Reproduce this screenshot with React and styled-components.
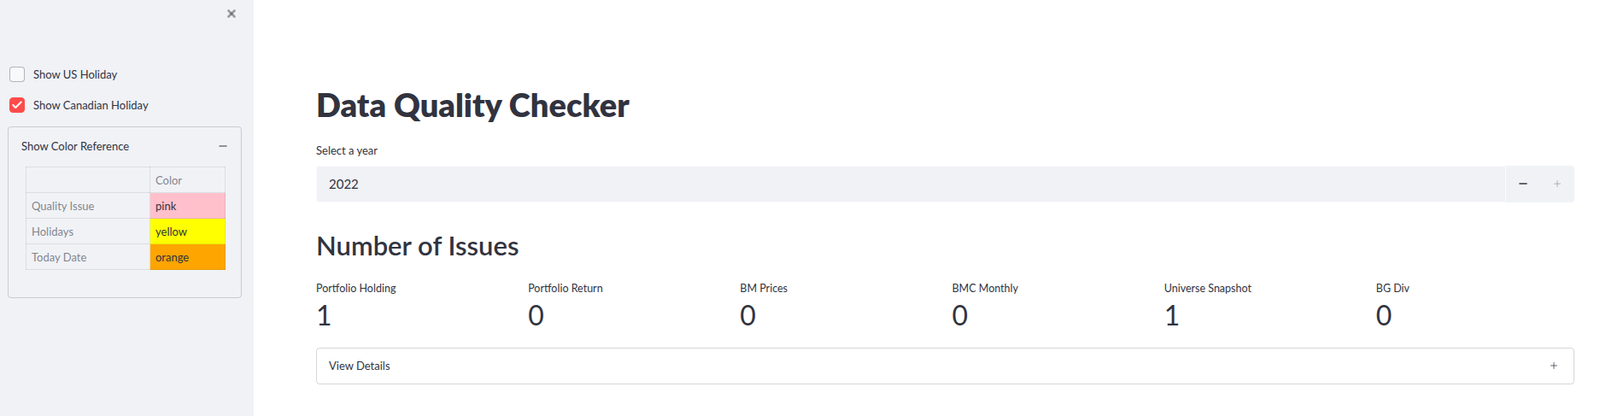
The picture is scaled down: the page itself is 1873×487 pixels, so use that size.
import React from "react";
import styled, { createGlobalStyle } from "styled-components";
import { X, Check, Minus, Plus } from "lucide-react";

const GlobalStyle = createGlobalStyle`
  body {
    margin: 0;
    font-family: Lato, "Liberation Sans", sans-serif;
    color: #31333f;
    background: #ffffff;
  }
`

const Page = styled.div`
  display: flex;
  height: 487px;
`

const Sidebar = styled.aside`
  width: 297px;
  flex-shrink: 0;
  background: #f0f2f6;
  display: flex;
  flex-direction: column;
  padding: 0 14px 0 9px;
  box-sizing: border-box;
`

const CloseRow = styled.div`
  display: flex;
  justify-content: flex-end;
  padding: 9px 0 0;
  margin-right: 5px;
  color: rgba(49, 51, 63, 0.45);
`

const CheckRow = styled.label`
  display: flex;
  align-items: center;
  gap: 10px;
  margin-left: 2px;
  height: 20px;
  margin-top: ${p => p.$top}px;
  font-size: 13px;
`

const Box = styled.span`
  width: 18px;
  height: 18px;
  box-sizing: border-box;
  border-radius: 4px;
  display: flex;
  align-items: center;
  justify-content: center;
  background: ${p => p.$checked ? "#ff4b4b" : "#f8f9fb"};
  border: 1px solid ${p => p.$checked ? "#ff4b4b" : "rgba(49, 51, 63, 0.35)"};
  color: #fff;
`

const Expander = styled.div`
  margin-top: 15px;
  border: 1px solid rgba(49, 51, 63, 0.2);
  border-radius: 4px;
  padding: 0 20px 32px 20px;
`

const ExpanderHead = styled.div`
  display: flex;
  align-items: center;
  justify-content: space-between;
  height: 44px;
  margin: 0 -6px 2px -5px;
  font-size: 13px;
`

const Table = styled.table`
  border-collapse: collapse;
  table-layout: fixed;
  width: 233px;
  font-size: 13px;
`

const Col = styled.col`
  width: ${p => p.$width}px;
`

const Cell = styled.td`
  border: 1px solid rgba(49, 51, 63, 0.1);
  height: 29px;
  padding: 0 6px;
  color: ${p => p.$index ? "rgba(49, 51, 63, 0.6)" : "#31333f"};
  background: ${p => p.$bg || "transparent"};
`

const Main = styled.main`
  flex: 1;
  padding: 100px 30px 0 73px;
  display: flex;
  flex-direction: column;
  min-width: 0;
`

const Title = styled.h1`
  margin: 0;
  font-size: 38px;
  line-height: 1.2;
  font-weight: 800;
`

const FieldLabel = styled.div`
  margin-top: 20px;
  font-size: 13px;
  line-height: 20px;
`

const NumberInput = styled.div`
  margin-top: 8px;
  display: flex;
  height: 43px;
  background: #f0f2f6;
  border-radius: 4px;
`

const InputField = styled.div`
  flex: 1;
  display: flex;
  align-items: center;
  padding-left: 14px;
  font-size: 15px;
  border: 1px solid #fafbfc;
  border-radius: 4px 0 0 4px;
`

const StepButton = styled.div`
  width: 40px;
  display: flex;
  align-items: center;
  justify-content: center;
  color: ${p => p.$disabled ? "rgba(49, 51, 63, 0.25)" : "#31333f"};
`

const Heading = styled.h2`
  margin: 32px 0 0;
  font-size: 31px;
  line-height: 1.2;
  font-weight: 600;
`

const Metrics = styled.div`
  margin-top: 22px;
  display: grid;
  grid-template-columns: repeat(6, 1fr);
  gap: 16px;
`

const Metric = styled.div`
  display: flex;
  flex-direction: column;
`

const MetricLabel = styled.div`
  font-size: 12.5px;
  line-height: 20px;
`

const MetricValue = styled.div`
  font-size: 32px;
  line-height: 42px;
  font-weight: 400;
`

const Details = styled.div`
  margin-top: 17px;
  height: 43px;
  box-sizing: border-box;
  border: 1px solid rgba(49, 51, 63, 0.2);
  border-radius: 4px;
  display: flex;
  align-items: center;
  justify-content: space-between;
  padding: 0 17px 0 14px;
  font-size: 13px;
`

const colors = [
    {name: "Quality Issue", value: "pink", bg: "#ffc0cb"},
    {name: "Holidays", value: "yellow", bg: "#ffff00"},
    {name: "Today Date", value: "orange", bg: "#ffa500"},
]

const metrics = [
    {label: "Portfolio Holding", value: 1},
    {label: "Portfolio Return", value: 0},
    {label: "BM Prices", value: 0},
    {label: "BMC Monthly", value: 0},
    {label: "Universe Snapshot", value: 1},
    {label: "BG Div", value: 0},
]

const App = () => {
    return (
        <>
            <GlobalStyle/>
            <Page>
                <Sidebar>
                    <CloseRow><X size={14} strokeWidth={4.5}/></CloseRow>
                    <CheckRow $top={54}>
                        <Box/>
                        Show US Holiday
                    </CheckRow>
                    <CheckRow $top={16}>
                        <Box $checked><Check size={14} strokeWidth={3.5}/></Box>
                        Show Canadian Holiday
                    </CheckRow>
                    <Expander>
                        <ExpanderHead>
                            <span>Show Color Reference</span>
                            <Minus size={14} strokeWidth={2}/>
                        </ExpanderHead>
                        <Table>
                            <colgroup>
                                <Col $width={145}/>
                                <Col $width={88}/>
                            </colgroup>
                            <tbody>
                                <tr>
                                    <Cell $index></Cell>
                                    <Cell $index>Color</Cell>
                                </tr>
                                {colors.map(c => (
                                    <tr key={c.name}>
                                        <Cell $index>{c.name}</Cell>
                                        <Cell $bg={c.bg}>{c.value}</Cell>
                                    </tr>
                                ))}
                            </tbody>
                        </Table>
                    </Expander>
                </Sidebar>
                <Main>
                    <Title>Data Quality Checker</Title>
                    <FieldLabel>Select a year</FieldLabel>
                    <NumberInput>
                        <InputField>2022</InputField>
                        <StepButton><Minus size={14} strokeWidth={2.5}/></StepButton>
                        <StepButton $disabled><Plus size={12} strokeWidth={2.5}/></StepButton>
                    </NumberInput>
                    <Heading>Number of Issues</Heading>
                    <Metrics>
                        {metrics.map(m => (
                            <Metric key={m.label}>
                                <MetricLabel>{m.label}</MetricLabel>
                                <MetricValue>{m.value}</MetricValue>
                            </Metric>
                        ))}
                    </Metrics>
                    <Details>
                        <span>View Details</span>
                        <Plus size={12} strokeWidth={1.5}/>
                    </Details>
                </Main>
            </Page>
        </>
    );
};

export default App;
